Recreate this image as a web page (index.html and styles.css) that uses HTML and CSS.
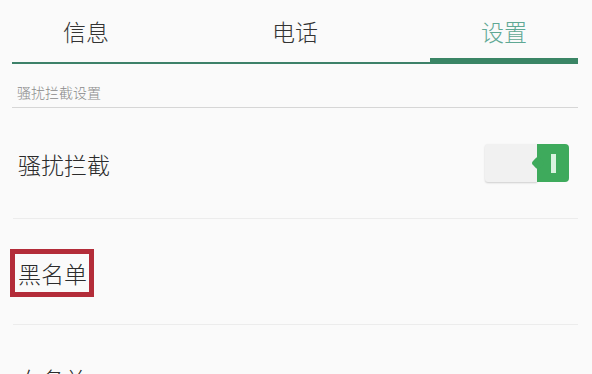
FILE: index.html
```html
<!DOCTYPE html>
<html lang="zh">
<head>
<meta charset="utf-8">
<link rel="stylesheet" href="styles.css">
</head>
<body>
<div class="page">
  <div class="tabbar">
    <div class="tabs">
      <div class="tab">信息</div>
      <div class="tab">电话</div>
      <div class="tab active">设置</div>
    </div>
    <div class="track">
      <div class="line"></div>
      <div class="indicator"></div>
    </div>
  </div>
  <div class="section">骚扰拦截设置</div>
  <div class="row first">
    <span class="label">骚扰拦截</span>
    <div class="switch">
      <div class="switch-track"></div>
      <div class="switch-knob"><span class="knob-bar"></span></div>
    </div>
  </div>
  <div class="row">
    <span class="label highlight">黑名单</span>
  </div>
  <div class="row last">
    <span class="label">白名单</span>
  </div>
</div>
</body>
</html>
```
FILE: styles.css
```css
html, body {
  margin: 0;
  padding: 0;
  background: #fafafa;
}
body {
  font-family: "Noto Sans CJK SC", "Noto Sans", sans-serif;
  color: #2b2b2b;
  width: 592px;
  height: 374px;
  overflow: hidden;
}
.page {
  padding: 0 14px 0 12px;
}
.tabs {
  display: grid;
  grid-template-columns: 148px 1fr 148px;
  height: 58px;
  padding-top: 3px;
  box-sizing: border-box;
  align-items: center;
}
.tab {
  text-align: center;
  font-size: 23px;
  line-height: 30px;
  font-weight: 300;
  color: #333;
}
.tab.active {
  color: #5fa894;
}
.track {
  display: flex;
  align-items: flex-end;
  height: 6px;
}
.line {
  flex: 1;
  height: 2px;
  background: #3d8169;
}
.indicator {
  width: 148px;
  height: 6px;
  background: #3a8565;
}
.section {
  font-size: 14px;
  line-height: 20px;
  font-weight: 300;
  color: #8a8a8a;
  padding: 18px 0 5px 5px;
  border-bottom: 1px solid #d6d6d6;
}
.row {
  height: 103px;
  border-bottom: 1px solid #ececec;
  display: flex;
  align-items: center;
  justify-content: space-between;
  padding-left: 5px;
  padding-top: 2px;
  margin-left: 1px;
}
.row.first {
  height: 108px;
}
.row.last {
  border-bottom: none;
}
.label {
  font-size: 23px;
  line-height: 30px;
  font-weight: 300;
  color: #2b2b2b;
}
.label.highlight {
  border: 5px solid #b32c39;
  padding: 4px 2px 4px 3px;
  margin-left: -8px;
}
.switch {
  display: flex;
  margin-right: 9px;
  margin-top: -2px;
}
.switch-track {
  width: 52px;
  height: 38px;
  background: #f1f1f1;
  border-radius: 3px 0 0 3px;
  box-shadow: 0 1px 2px rgba(0,0,0,0.18);
}
.switch-knob {
  position: relative;
  width: 32px;
  height: 38px;
  background: #3eaa5c;
  border-radius: 0 4px 4px 0;
  display: flex;
  align-items: center;
  justify-content: center;
}
.switch-knob::before {
  content: "";
  position: absolute;
  left: -4px;
  top: 14px;
  width: 10px;
  height: 10px;
  background: #3eaa5c;
  transform: rotate(45deg);
  border-radius: 3px;
}
.knob-bar {
  position: relative;
  width: 5px;
  height: 19px;
  background: #d9f3df;
}
```
